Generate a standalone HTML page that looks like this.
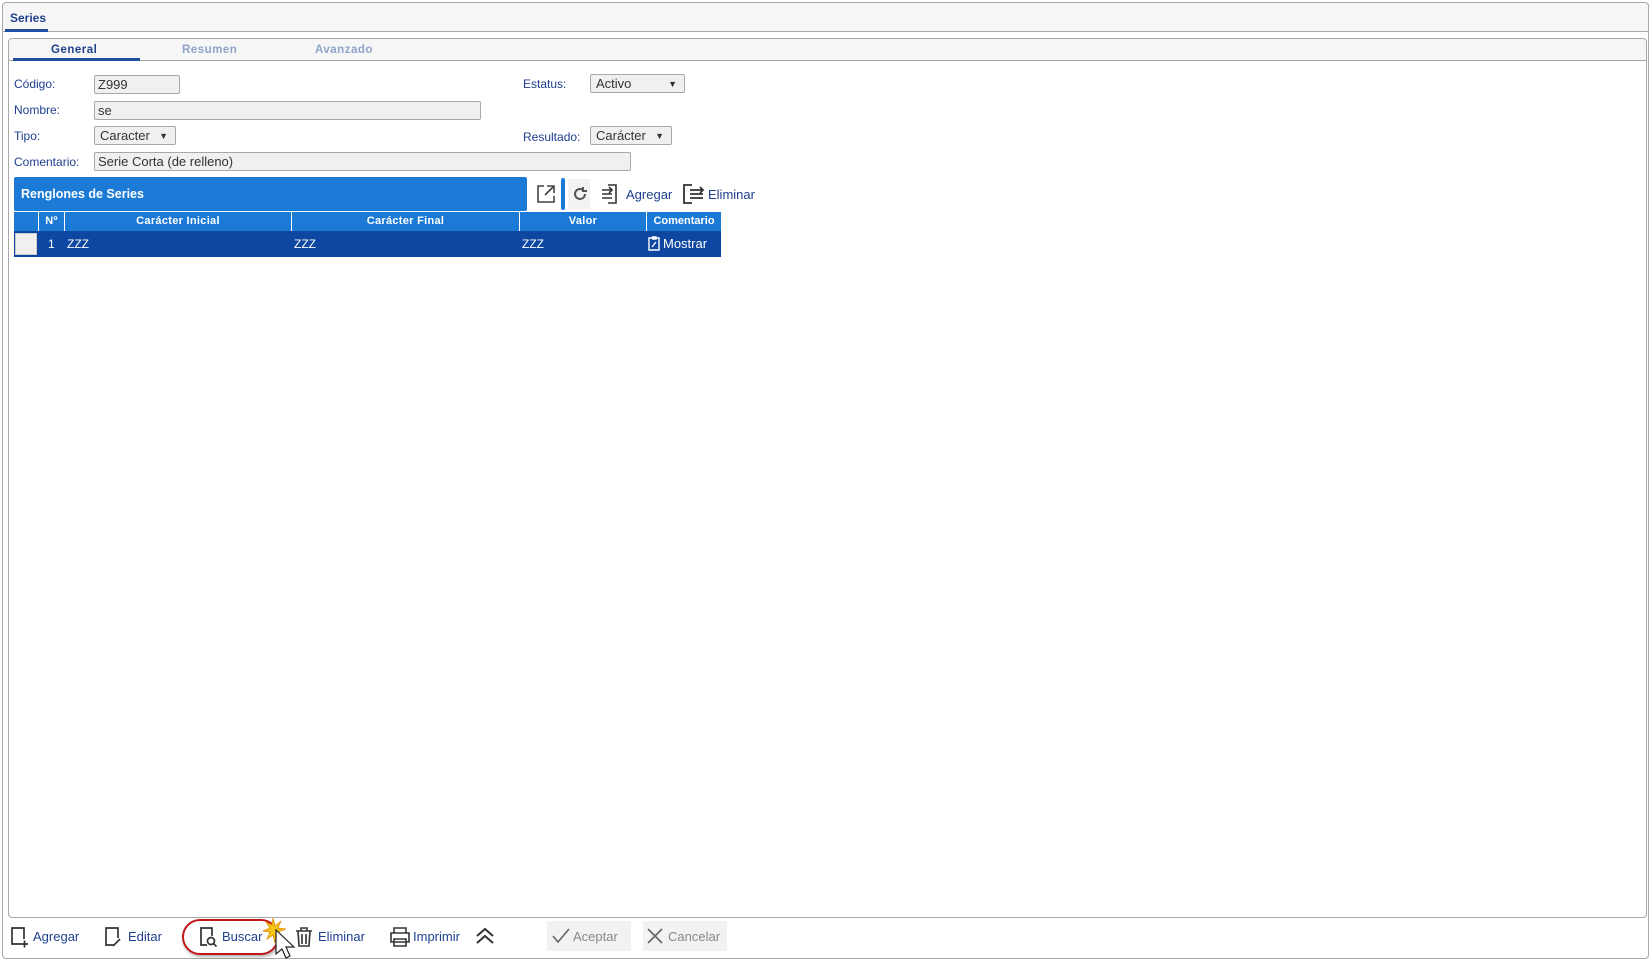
<!DOCTYPE html>
<html><head><meta charset="utf-8"><style>
*{box-sizing:border-box;margin:0;padding:0}
body{width:1651px;height:961px;background:#fff;font-family:"Liberation Sans",sans-serif;font-size:12px;color:#1f3f8f;position:relative;overflow:hidden}
.a{position:absolute}
.outer{left:2px;top:2px;width:1647px;height:957px;border:1px solid #a8a8a8;border-radius:4px;background:#fff}
.topbar{left:3px;top:3px;width:1645px;height:29px;background:#f6f6f6;border-bottom:1px solid #a8a8a8;border-radius:4px 4px 0 0}
.inner{left:8px;top:38px;width:1639px;height:880px;border:1px solid #a8a8a8;border-radius:4px;background:#fff}
.tabbar{left:9px;top:39px;width:1637px;height:22px;background:#f6f6f6;border-bottom:1px solid #a8a8a8;border-radius:4px 4px 0 0}
.lbl{font-size:12px;color:#1f3f8f}
.inp{border:1px solid #a8a8a8;background:#f0f0f0;height:19px;font-size:13px;color:#333;padding:1px 3px;line-height:16px;border-radius:2px}
.sel{border:1px solid #a8a8a8;background:#f0f0f0;height:19px;font-size:13px;color:#333;padding:1px 5px;line-height:16px;border-radius:2px}
.sel span{position:absolute;right:7px;top:1px;font-size:9px}
.th{top:212px;height:19px;background:#1b7ad6;color:#fff;font-weight:bold;font-size:11px;text-align:center;line-height:19px;border-right:1px solid #fff;letter-spacing:.3px}
.td{top:231px;height:26px;color:#fff;font-size:12px;line-height:26px}
.tb{top:928px;font-size:13px;color:#1f3f8f}
.tab{top:44px;font-weight:bold;font-size:11.5px;letter-spacing:.5px}
</style></head><body>
<div class="a outer"></div>
<div class="a topbar"></div>
<div class="a" style="left:10px;top:11px;font-weight:bold;font-size:12px;color:#1f3f8f">Series</div>
<div class="a" style="left:5px;top:29px;width:43px;height:3px;background:#1f4fa0"></div>
<div class="a inner"></div>
<div class="a tabbar"></div>
<div class="a tab" style="left:51px;color:#1f3f8f">General</div>
<div class="a tab" style="left:182px;color:#8ea3c8">Resumen</div>
<div class="a tab" style="left:315px;color:#8ea3c8">Avanzado</div>
<div class="a" style="left:13px;top:58px;width:127px;height:3px;background:#1f4fa0"></div>

<div class="a lbl" style="left:14px;top:77px">Código:</div>
<div class="a inp" style="left:94px;top:75px;width:86px">Z999</div>
<div class="a lbl" style="left:14px;top:103px">Nombre:</div>
<div class="a inp" style="left:94px;top:101px;width:387px">se</div>
<div class="a lbl" style="left:14px;top:129px">Tipo:</div>
<div class="a sel" style="left:94px;top:126px;width:82px">Caracter<span>▼</span></div>
<div class="a lbl" style="left:14px;top:155px">Comentario:</div>
<div class="a inp" style="left:94px;top:152px;width:537px">Serie Corta (de relleno)</div>
<div class="a lbl" style="left:523px;top:77px">Estatus:</div>
<div class="a sel" style="left:590px;top:74px;width:95px">Activo<span>▼</span></div>
<div class="a lbl" style="left:523px;top:130px">Resultado:</div>
<div class="a sel" style="left:590px;top:126px;width:82px">Carácter<span>▼</span></div>

<div class="a" style="left:14px;top:177px;width:513px;height:34px;background:#1b7ad6;border-radius:2px;color:#fff;font-weight:bold;font-size:12.5px;line-height:34px;padding-left:7px">Renglones de Series</div>
<svg class="a" style="left:535px;top:183px" width="22" height="22" viewBox="0 0 22 22" fill="none" stroke="#444" stroke-width="1.6"><path d="M9 3H3v16h16v-6M12 3h7v7M19 3l-9 9"/></svg>
<div class="a" style="left:561px;top:178px;width:4px;height:32px;background:#1b7ad6;border-radius:2px"></div>
<div class="a" style="left:568px;top:179px;width:22px;height:30px;background:#f2f2f2"></div>
<svg class="a" style="left:571px;top:185px" width="18" height="18" viewBox="0 0 18 18" fill="none" stroke="#555" stroke-width="2"><path d="M14 9a5 5 0 1 1-2-4M12 2v4h4"/></svg>
<svg class="a" style="left:600px;top:183px" width="20" height="22" viewBox="0 0 20 22" fill="none" stroke="#333" stroke-width="1.6"><path d="M8 2h8v18H8M2 7h10M2 11h10M2 15h10M9 4l3 3-3 3"/></svg>
<div class="a" style="left:626px;top:187px;font-size:13px;color:#1f3f8f">Agregar</div>
<svg class="a" style="left:682px;top:183px" width="24" height="22" viewBox="0 0 24 22" fill="none" stroke="#333" stroke-width="1.8"><path d="M10 2H2v18h8M8 7h13M8 11h13M8 15h13M18 4l3 3-3 3"/></svg>
<div class="a" style="left:708px;top:187px;font-size:13px;color:#1f3f8f">Eliminar</div>

<div class="a th" style="left:14px;width:25px"></div>
<div class="a th" style="left:39px;width:26px">Nº</div>
<div class="a th" style="left:65px;width:227px">Carácter Inicial</div>
<div class="a th" style="left:292px;width:228px">Carácter Final</div>
<div class="a th" style="left:520px;width:127px">Valor</div>
<div class="a th" style="left:647px;width:74px;border-right:none;letter-spacing:0">Comentario</div>
<div class="a" style="left:14px;top:231px;width:707px;height:26px;background:#0d47a1"></div>
<div class="a" style="left:15px;top:233px;width:22px;height:22px;background:#f0f0f0;border:1px solid #ccc"></div>
<div class="a td" style="left:48px">1</div>
<div class="a td" style="left:67px">ZZZ</div>
<div class="a td" style="left:294px">ZZZ</div>
<div class="a td" style="left:522px">ZZZ</div>
<svg class="a" style="left:648px;top:236px" width="12" height="15" viewBox="0 0 12 15" fill="none" stroke="#fff" stroke-width="1.4"><path d="M1 2h10v12H1zM4 1h4v2H4M4 11l4-5"/></svg>
<div class="a td" style="left:663px;font-size:13px">Mostrar</div>

<svg class="a" style="left:10px;top:926px" width="20" height="22" viewBox="0 0 20 22" fill="none" stroke="#333" stroke-width="1.7"><path d="M13 18H2V2h12v11M11 18h7M14.5 14.5v7"/></svg>
<div class="a tb" style="left:33px;top:929px">Agregar</div>
<svg class="a" style="left:104px;top:926px" width="20" height="22" viewBox="0 0 20 22" fill="none" stroke="#333" stroke-width="1.7"><path d="M10 19H2V2h12v10M9 20l7-7"/></svg>
<div class="a tb" style="left:128px;top:929px">Editar</div>
<div class="a" style="left:182px;top:919px;width:97px;height:36px;border:2px solid #c0161a;border-radius:18px;box-shadow:1px 2px 3px rgba(0,0,0,.3)"></div>
<svg class="a" style="left:199px;top:926px" width="20" height="22" viewBox="0 0 20 22" fill="none" stroke="#333" stroke-width="1.7"><path d="M8 19H2V2h11v8"/><circle cx="12" cy="15" r="3.5"/><path d="M14.5 17.5l3 3"/></svg>
<div class="a tb" style="left:222px;top:929px">Buscar</div>
<svg class="a" style="left:262px;top:916px" width="36" height="46" viewBox="0 0 36 46"><path d="M11 2l2 8 6-5-3 7 8 1-8 3 5 6-7-3-1 8-2-8-6 4 3-7-7-1 7-3-4-6 6 3z" fill="#f5c518" stroke="#e08a00" stroke-width=".8"/><path d="M14 14v24l6-5 4 9 4-2-4-9 8 0z" fill="#fff" stroke="#222" stroke-width="1.2"/></svg>
<svg class="a" style="left:295px;top:926px" width="18" height="22" viewBox="0 0 18 22" fill="none" stroke="#333" stroke-width="1.6"><path d="M1 5h16M6 5V2h6v3M3 5l1 15h10l1-15M7 8v10M11 8v10"/></svg>
<div class="a tb" style="left:318px;top:929px">Eliminar</div>
<svg class="a" style="left:389px;top:926px" width="22" height="22" viewBox="0 0 22 22" fill="none" stroke="#333" stroke-width="1.6"><path d="M5 7V2h12v5M2 7h18v9H2zM5 13h12v7H5z"/></svg>
<div class="a tb" style="left:413px;top:929px">Imprimir</div>
<svg class="a" style="left:474px;top:926px" width="22" height="20" viewBox="0 0 22 20" fill="none" stroke="#333" stroke-width="2"><path d="M3 10l8-7 8 7M3 17l8-7 8 7"/></svg>
<div class="a" style="left:547px;top:921px;width:84px;height:30px;background:#f2f2f2"></div>
<svg class="a" style="left:552px;top:928px" width="18" height="16" viewBox="0 0 18 16" fill="none" stroke="#666" stroke-width="1.6"><path d="M1 8l5 6L17 1"/></svg>
<div class="a tb" style="left:573px;top:929px;color:#888">Aceptar</div>
<div class="a" style="left:643px;top:921px;width:84px;height:30px;background:#f2f2f2"></div>
<svg class="a" style="left:647px;top:928px" width="16" height="16" viewBox="0 0 16 16" fill="none" stroke="#666" stroke-width="1.6"><path d="M1 1l14 14M15 1L1 15"/></svg>
<div class="a tb" style="left:668px;top:929px;color:#888">Cancelar</div>
</body></html>
